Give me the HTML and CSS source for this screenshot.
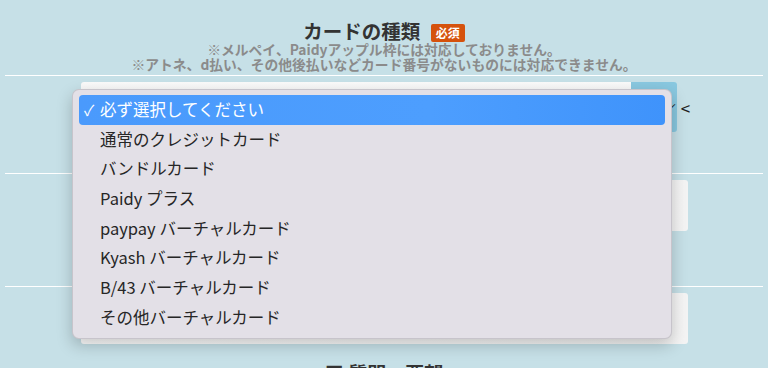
FILE: index.html
```html
<!DOCTYPE html>
<html lang="ja">
<head>
    <meta charset="UTF-8">
    <meta name="viewport" content="width=device-width, initial-scale=1.0">
    <title>カードの種類</title>
    <link rel="stylesheet" href="styles.css">
</head>
<body>
    <div class="form-container">
        <div class="form-head">
            <h2 class="form-title">カードの種類 <span class="required">必須</span></h2>
            <p class="note">※メルペイ、Paidyアップル枠には対応しておりません。</p>
            <p class="note">※アトネ、d払い、その他後払いなどカード番号がないものには対応できません。</p>
        </div>
        <hr class="divider">
        <div class="field">
            <div class="select-box">
                <div class="select-value"></div>
                <div class="select-arrow"></div>
            </div>
            <span class="select-mark"><span class="tick">ˊ</span>&lt;</span>
        </div>
        <hr class="divider gap-top">
        <div class="field">
            <div class="input-box"></div>
        </div>
        <hr class="divider gap-top-lg">
        <div class="field">
            <div class="input-box"></div>
        </div>
        <h2 class="section-title">■ 質問・要望</h2>

        <!-- open select menu -->
        <ul class="select-menu">
            <li class="selected"><span class="check">✓</span>必ず選択してください</li>
            <li>通常のクレジットカード</li>
            <li>バンドルカード</li>
            <li>Paidy プラス</li>
            <li>paypay バーチャルカード</li>
            <li>Kyash バーチャルカード</li>
            <li>B/43 バーチャルカード</li>
            <li>その他バーチャルカード</li>
        </ul>
    </div>
</body>
</html>
```

FILE: styles.css
```css
body {
    margin: 0;
    padding: 0;
    background-color: #c6e0e7;
    font-family: "Noto Sans CJK JP", "Noto Sans", sans-serif;
    color: #333;
    overflow: hidden;
    height: 368px;
}

.form-container {
    position: relative;
    padding: 0 5px;
}

.form-head {
    text-align: center;
    padding-top: 20px;
}

.form-title {
    margin: 0;
    font-size: 19.5px;
    font-weight: bold;
    line-height: 22px;
    color: #333;
}

.required {
    display: inline-block;
    vertical-align: 1px;
    margin-left: 6px;
    padding: 0 5px;
    height: 18px;
    line-height: 18px;
    font-size: 12px;
    color: #fff;
    background-color: #d5520d;
    border-radius: 2px;
}

.note {
    margin: 0;
    font-size: 13.8px;
    font-weight: bold;
    line-height: 15px;
    color: #8b8b8b;
}

.divider {
    margin: 3px 0 0;
    border: none;
    height: 1px;
    background-color: #fff;
}

.gap-top {
    margin-top: 41px;
}

.gap-top-lg {
    margin-top: 55px;
}

.field {
    display: flex;
    align-items: center;
    width: 607px;
    margin: 6px auto 0;
    position: relative;
}

.select-box {
    display: flex;
    width: 596px;
    height: 50px;
}

.select-value {
    flex: 1;
    background: linear-gradient(#fafafa, #ececec);
    border-radius: 3px 0 0 3px;
}

.select-arrow {
    width: 46px;
    background-color: #89c8e0;
    border-radius: 0 3px 3px 0;
}

.select-mark {
    position: absolute;
    left: 589px;
    top: 13px;
    font-size: 17px;
    color: #222;
}

.tick {
    font-size: 12px;
    margin-right: 4px;
}

.input-box {
    width: 607px;
    height: 51px;
    background: linear-gradient(90deg, #fff, #f4f4f4);
    border-radius: 3px;
}

.section-title {
    margin: 15px 0 0;
    text-align: center;
    font-size: 19px;
    font-weight: bold;
    color: #333;
}

/* dropdown overlay */
.select-menu {
    position: absolute;
    top: 89px;
    left: 72px;
    width: 586px;
    margin: 0;
    padding: 5px 6px;
    list-style: none;
    background-color: #e3e0e7;
    border: 1px solid rgba(0, 0, 0, 0.12);
    border-radius: 7px;
    box-shadow: 0 6px 16px rgba(0, 0, 0, 0.22);
}

.select-menu li {
    height: 29.7px;
    line-height: 29.7px;
    padding-left: 21px;
    font-size: 16.5px;
    color: #262626;
    white-space: nowrap;
}

.select-menu li.selected {
    background: linear-gradient(90deg, #4a9afc, #4d9efe 60%, #3f93fb);
    color: #fff;
    border-radius: 4px;
    padding-left: 5px;
}

.check {
    display: inline-block;
    width: 16px;
    font-size: 15px;
}
```
